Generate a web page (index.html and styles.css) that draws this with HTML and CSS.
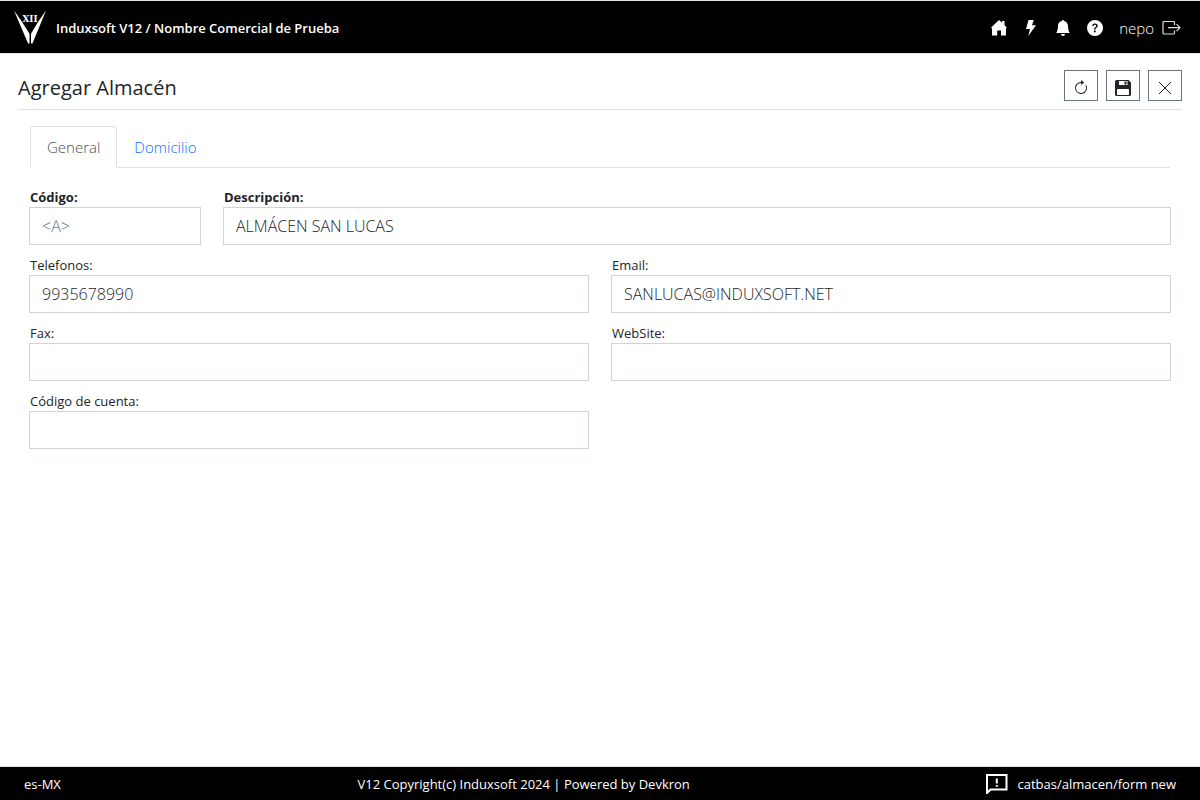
FILE: index.html
```html
<!DOCTYPE html>
<html lang="es-MX">
<head>
    <meta charset="UTF-8">
    <meta name="viewport" content="width=device-width, initial-scale=1.0">
    <title>Agregar Almacén</title>
    <link rel="stylesheet" href="styles.css">
</head>
<body>
    <header class="topbar">
        <a class="brand" href="#">
            <svg class="logo" viewBox="0 0 34 36" aria-hidden="true">
                <path fill="#fff" d="M0 0 L8.500 12 L16 24 V34 H14.500 Z M33 0 L24.500 12 L17.500 24 V34 H19 Z"/>
                <text x="16.500" y="12" text-anchor="middle" class="logo-text">XII</text>
            </svg>
            <span>Induxsoft V12 / Nombre Comercial de Prueba</span>
        </a>
        <nav class="topnav">
            <a href="#" aria-label="Inicio">
                <svg viewBox="0 0 16 16"><path d="M8 0 L11 2.800 V1 H13.500 V5.200 L15.600 7.200 V8.200 H15 V15.600 H10 V10.400 H6.200 V15.600 H1 V8.200 H.4 V7.200 Z"/></svg>
            </a>
            <a href="#" aria-label="Accesos">
                <svg viewBox="0 0 16 16"><path d="M5.500 0 H10.800 L9 5.200 H13 L5.200 16 L7 9 H3 Z"/></svg>
            </a>
            <a href="#" aria-label="Notificaciones">
                <svg viewBox="0 0 16 16"><path d="M8 16a2 2 0 0 0 2-2H6a2 2 0 0 0 2 2m.995-14.901a1 1 0 1 0-1.990 0A5 5 0 0 0 3 6c0 1.098-.5 6-2 7h14c-1.500-1-2-5.902-2-7 0-2.420-1.720-4.440-4.005-4.901"/></svg>
            </a>
            <a href="#" aria-label="Ayuda">
                <svg viewBox="0 0 16 16"><path d="M16 8A8 8 0 1 1 0 8a8 8 0 0 1 16 0M5.496 6.033h.825c.138 0 .248-.113.266-.250.090-.656.540-1.134 1.342-1.134.686 0 1.314.343 1.314 1.168 0 .635-.374.927-.965 1.371-.673.489-1.206 1.060-1.168 1.987l.003.217a.25.25 0 0 0 .25.246h.811a.25.25 0 0 0 .25-.25v-.105c0-.718.273-.927 1.010-1.486.609-.463 1.244-.977 1.244-2.056 0-1.511-1.276-2.241-2.673-2.241-1.267 0-2.655.590-2.750 2.286a.237.237 0 0 0 .241.247m2.325 6.443c.610 0 1.029-.394 1.029-.927 0-.552-.420-.940-1.029-.940-.584 0-1.009.388-1.009.940 0 .533.425.927 1.010.927z"/></svg>
            </a>
            <a class="user" href="#">
                nepo
                <svg class="exit" viewBox="0 0 20 16" fill="none"><path d="M12.500 5 V2.500 Q12.500 1.500 11.500 1.500 H2 Q1 1.500 1 2.500 V13 Q1 14 2 14 H11.500 Q12.500 14 12.500 13 V10.500 M6 7.700 H18 M14.500 4.200 L18 7.700 L14.500 11.200" stroke="#ddd" stroke-width="1.200"/></svg>
            </a>
        </nav>
    </header>

    <main class="content">
        <div class="title-row">
            <h1>Agregar Almacén</h1>
            <div class="tools">
                <button type="button" aria-label="Recargar">
                    <svg viewBox="0 0 16 16"><path d="M8 3a5 5 0 1 0 4.546 2.914.5.5 0 0 1 .908-.417A6 6 0 1 1 8 2z"/><path d="M8 4.466V.534a.25.25 0 0 1 .410-.192l2.360 1.966c.120.100.120.284 0 .384L8.410 4.658A.25.25 0 0 1 8 4.466"/></svg>
                </button>
                <button type="button" aria-label="Guardar">
                    <svg viewBox="0 0 16 16"><path fill-rule="evenodd" d="M1.500 0 H13.500 L16 2.500 V14.500 Q16 16 14.500 16 H1.500 Q0 16 0 14.500 V1.500 Q0 0 1.500 0 M4 1 V5 H12.500 V1 Z M3 9 Q2 9 2 10 V15 H14 V10 Q14 9 13 9 Z"/><path d="M9.500 1.500 H11.500 V4.500 H9.500 Z"/></svg>
                </button>
                <button type="button" aria-label="Cerrar">
                    <svg viewBox="0 0 16 16"><path d="M2 2 L14 14 M14 2 L2 14" stroke="#212529" stroke-width="1"/></svg>
                </button>
            </div>
        </div>

        <div class="panel">
            <nav class="tabs">
                <a class="tab active" href="#general">General</a>
                <a class="tab" href="#domicilio">Domicilio</a>
            </nav>
            <form class="fields" id="general">
                <div class="field short required">
                    <label for="codigo">Código:</label>
                    <input type="text" id="codigo" placeholder="&lt;A&gt;">
                </div>
                <div class="field long required">
                    <label for="descripcion">Descripción:</label>
                    <input type="text" id="descripcion" value="ALMÁCEN SAN LUCAS">
                </div>
                <div class="field">
                    <label for="telefonos">Telefonos:</label>
                    <input type="text" id="telefonos" value="9935678990">
                </div>
                <div class="field">
                    <label for="email">Email:</label>
                    <input type="text" id="email" value="SANLUCAS@INDUXSOFT.NET">
                </div>
                <div class="field">
                    <label for="fax">Fax:</label>
                    <input type="text" id="fax">
                </div>
                <div class="field">
                    <label for="website">WebSite:</label>
                    <input type="text" id="website">
                </div>
                <div class="field">
                    <label for="cuenta">Código de cuenta:</label>
                    <input type="text" id="cuenta">
                </div>
            </form>
        </div>
    </main>

    <footer class="footer">
        <span>es-MX</span>
        <span>V12 Copyright(c) Induxsoft 2024 | Powered by Devkron</span>
        <a class="path" href="#">
            <svg viewBox="0 0 22 20" fill="none"><path d="M1 19 V1 H20.500 V15.500 H4.500 Z" stroke="#fff" stroke-width="2"/><path d="M10.800 4.500 V9.500 M10.800 11 V12.800" stroke="#fff" stroke-width="2"/></svg>
            catbas/almacen/form new
        </a>
    </footer>
</body>
</html>
```

FILE: styles.css
```css
* {
    box-sizing: border-box;
}
body {
    margin: 0;
    min-height: 100vh;
    display: flex;
    flex-direction: column;
    font-family: "Open Sans", "Noto Sans", sans-serif;
    font-size: 15px;
    font-weight: 300;
    color: #212529;
    background-color: #fff;
}
a {
    text-decoration: none;
}
svg {
    display: block;
}

/* top bar */
.topbar {
    display: flex;
    justify-content: space-between;
    align-items: center;
    height: 54px;
    padding: 2px 18px 0 14px;
    background-color: #000;
    border-top: 1px solid #dee2e6;
    border-bottom: 1px solid #dee2e6;
}
.brand {
    display: flex;
    align-items: center;
    gap: 9px;
    color: #fff;
    font-size: 13px;
    font-weight: 600;
}
.logo {
    width: 33px;
    height: 36px;
}
.logo-text {
    fill: #fff;
    font-family: "DejaVu Serif", serif;
    font-size: 9px;
}
.topnav {
    display: flex;
    align-items: center;
    gap: 16px;
}
.topnav a {
    color: #fff;
}
.topnav svg {
    width: 16px;
    height: 16px;
    fill: #fff;
}
.topnav .user {
    display: flex;
    align-items: center;
    gap: 8px;
}
.topnav .exit {
    width: 20px;
    fill: none;
}

/* page */
.content {
    flex: 1;
    padding: 16px 18px;
}
.title-row {
    display: flex;
    justify-content: space-between;
    align-items: flex-start;
    height: 40px;
    border-bottom: 1px solid #dee2e6;
}
h1 {
    margin: 4px 0 0;
    font-size: 20px;
    line-height: 28px;
    font-weight: 500;
}
.tools {
    display: flex;
    gap: 8px;
}
.tools button {
    display: flex;
    justify-content: center;
    align-items: flex-end;
    width: 34px;
    height: 31px;
    padding: 0 0 4px;
    border: 1px solid #6c757d;
    background-color: #fff;
    cursor: pointer;
}
.tools svg {
    width: 16px;
    height: 16px;
    fill: #212529;
}
.panel {
    padding: 16px 11px;
}
.tabs {
    display: flex;
    margin: 0 1px;
    border-bottom: 1px solid #dee2e6;
}
.tab {
    padding: 8px 16px;
    margin-bottom: -1px;
    border: 1px solid transparent;
    border-radius: 4px 4px 0 0;
    line-height: 24px;
    color: #0d6efd;
}
.tab.active {
    color: #495057;
    background-color: #fff;
    border-color: #dee2e6 #dee2e6 #fff;
}

/* form */
.fields {
    display: grid;
    grid-template-columns: repeat(12, 1fr);
    gap: 11px 22px;
    padding-top: 20px;
}
.field {
    grid-column: span 6;
    display: flex;
    flex-direction: column;
}
.field.short {
    grid-column: span 2;
}
.field.long {
    grid-column: span 10;
}
label {
    padding-left: 1px;
    font-size: 13px;
    line-height: 19px;
    font-weight: 400;
}
.required label {
    font-weight: 700;
}
input {
    width: 100%;
    height: 38px;
    padding: 0 12px;
    border: 1px solid #ced4da;
    font: inherit;
    font-size: 16px;
    color: #212529;
    background-color: #fff;
}
input::placeholder {
    color: #6c757d;
}

/* footer */
.footer {
    display: flex;
    justify-content: space-between;
    align-items: center;
    height: 34px;
    padding: 0 24px;
    border-top: 1px solid #dee2e6;
    background-color: #000;
    color: #fff;
    font-size: 13px;
    font-weight: 400;
}
.path {
    display: flex;
    align-items: center;
    gap: 9px;
    color: #fff;
}
.path svg {
    width: 22px;
    height: 20px;
}
```
